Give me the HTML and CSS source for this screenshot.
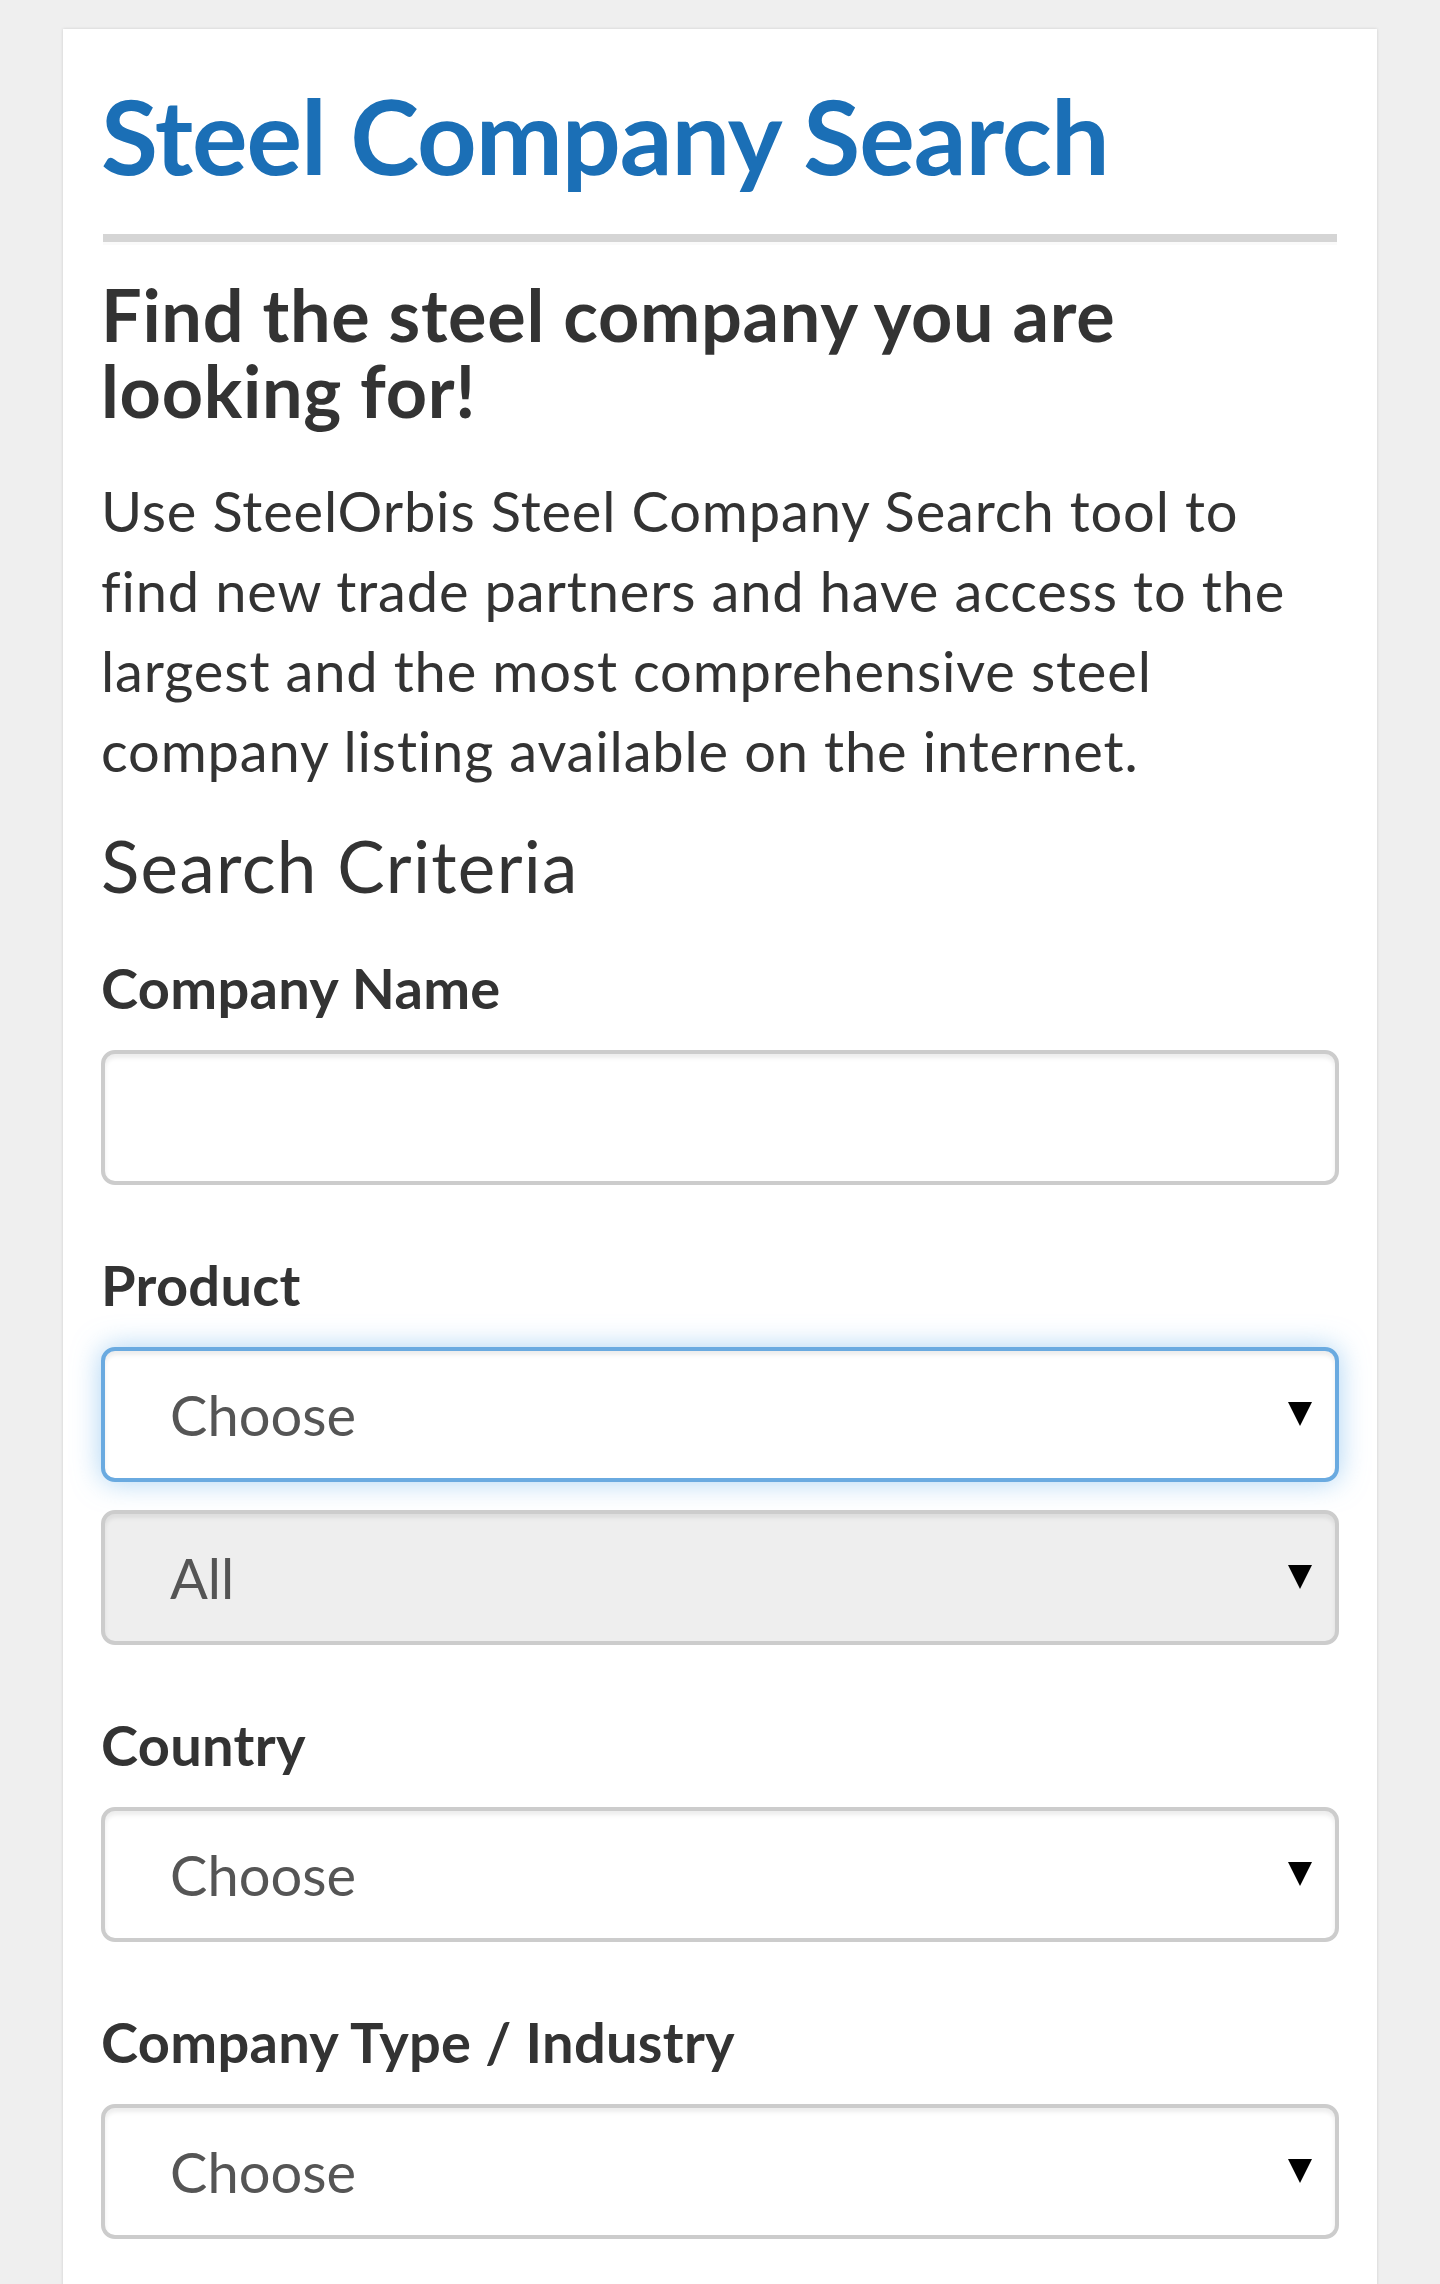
FILE: index.html
```html
<!DOCTYPE html>
<html>
<head>
	<title>Steel Company Search</title>

	<link rel="stylesheet" href="styles.css">

</head>
<body>

	<div class="card">
		<h1 class="title">Steel Company Search</h1>
		<hr class="rule">

		<h2 class="lead">Find the steel company you are looking for!</h2>
		<p class="intro">Use SteelOrbis Steel Company Search tool to find new trade partners and have access to the largest and the most comprehensive steel company listing available on the internet.</p>

		<h3 class="criteria">Search Criteria</h3>

		<form class="search">
			<div class="field first">
				<label for="company">Company Name</label>
				<input type="text" id="company" class="control">
			</div>

			<div class="field">
				<label for="product">Product</label>
				<div class="pick focus">
					<select id="product" class="control">
						<option>Choose</option>
					</select>
				</div>
				<div class="pick sub">
					<select class="control" disabled>
						<option>All</option>
					</select>
				</div>
			</div>

			<div class="field">
				<label for="country">Country</label>
				<div class="pick">
					<select id="country" class="control">
						<option>Choose</option>
					</select>
				</div>
			</div>

			<div class="field">
				<label for="type">Company Type / Industry</label>
				<div class="pick">
					<select id="type" class="control">
						<option>Choose</option>
					</select>
				</div>
			</div>
		</form>
	</div>

</body>
</html>
```
FILE: styles.css
```css
body{
	margin: 0;
	background: #efefef;
	font-family: Lato, "Open Sans", sans-serif;
	color: #333;
}

.card{
	background: #fff;
	margin: 29px 63px 0;
	padding: 49px 38px 80px 38px;
	box-shadow: 0 0 3px rgba(0,0,0,.14);
}

.title{
	margin: 0;
	font-size: 104px;
	line-height: 114px;
	font-weight: 700;
	letter-spacing: -1px;
	color: #1b6fb6;
}

.rule{
	margin: 42px 2px 0;
	height: 8px;
	border: 0;
	background: #d5d5d5;
	box-shadow: 0 3px 0 #fafafa;
}

.lead{
	margin: 34px 0 0;
	font-size: 72px;
	line-height: 76px;
	font-weight: 700;
	letter-spacing: .7px;
	color: #333;
}

.intro{
	margin: 43px 0 0;
	max-width: 1200px;
	font-size: 56px;
	line-height: 80px;
	letter-spacing: .85px;
}

.criteria{
	margin: 35px 0 0;
	font-size: 71px;
	line-height: 80px;
	font-weight: 400;
	letter-spacing: 1.3px;
}

.search{
	margin: 0;
}

.field{
	margin-top: 60px;
}

.field.first{
	margin-top: 42px;
}

.field label{
	display: block;
	font-size: 56px;
	line-height: 80px;
	font-weight: 700;
	letter-spacing: .3px;
	margin-bottom: 22px;
}

.control{
	display: block;
	box-sizing: border-box;
	width: 100%;
	height: 135px;
	margin: 0;
	padding: 0 80px 0 65px;
	border: 4px solid #ccc;
	border-radius: 14px;
	background: #fff;
	box-shadow: inset 0 4px 4px rgba(0,0,0,.075);
	font-family: inherit;
	font-size: 56px;
	color: #555;
	outline: none;
	-webkit-appearance: none;
	appearance: none;
}

.pick{
	position: relative;
}

.pick::after{
	content: "";
	position: absolute;
	right: 27px;
	top: 55px;
	border-left: 12px solid transparent;
	border-right: 12px solid transparent;
	border-top: 24px solid #000;
	pointer-events: none;
}

.pick.focus .control{
	border-color: #6aaae0;
	box-shadow: inset 0 4px 4px rgba(0,0,0,.075), 0 0 28px rgba(102,175,233,.55);
}

.pick.sub{
	margin-top: 28px;
}

.pick.sub .control{
	background: #eee;
	opacity: 1;
	color: #555;
}
```
